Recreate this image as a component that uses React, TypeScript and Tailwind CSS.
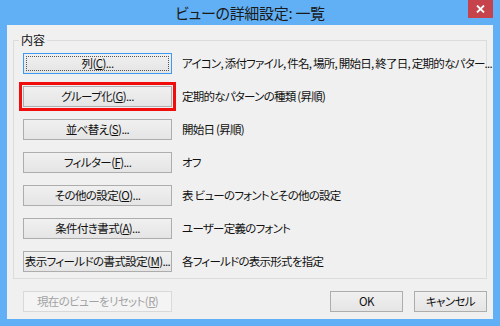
import type { ReactNode } from 'react';

const font =
  "font-['Meiryo_UI','Noto_Sans_CJK_JP','Noto_Sans',sans-serif] [font-feature-settings:'palt']";

type Row = {
  label: string;
  key: string;
  desc: string;
  focused?: boolean;
  marked?: boolean;
};

const rows: Row[] = [
  {
    label: '列(',
    key: 'C',
    desc: 'アイコン, 添付ファイル, 件名, 場所, 開始日, 終了日, 定期的なパター...',
    focused: true,
  },
  { label: 'グループ化(', key: 'G', desc: '定期的なパターンの種類 (昇順)', marked: true },
  { label: '並べ替え(', key: 'S', desc: '開始日 (昇順)' },
  { label: 'フィルター(', key: 'F', desc: 'オフ' },
  { label: 'その他の設定(', key: 'O', desc: '表 ビューのフォントとその他の設定' },
  { label: '条件付き書式(', key: 'A', desc: 'ユーザー定義のフォント' },
  { label: '表示フィールドの書式設定(', key: 'M', desc: '各フィールドの表示形式を指定' },
];

function WinButton({
  children,
  focused,
  disabled,
  className = '',
}: {
  children: ReactNode;
  focused?: boolean;
  disabled?: boolean;
  className?: string;
}) {
  return (
    <button
      type="button"
      disabled={disabled}
      className={`relative flex h-[21px] items-center justify-center whitespace-nowrap border text-[11.5px] leading-none tracking-[-0.6px] ${
        disabled
          ? 'border-[#d9d9d9] bg-[#f4f4f4] text-[#a3a3a3]'
          : focused
            ? 'border-[#3c9af0] bg-gradient-to-b from-[#f0f0f0] to-[#e5e5e5] text-[#111]'
            : 'border-[#adadad] bg-gradient-to-b from-[#f0f0f0] to-[#e5e5e5] text-[#111]'
      } ${className}`}
    >
      {focused && (
        <span className="pointer-events-none absolute inset-[2px] border border-dotted border-[#555]" />
      )}
      <span>{children}</span>
    </button>
  );
}

export default function App() {
  return (
    <div className={`h-[326px] w-[500px] bg-[#61b0f5] ${font}`}>
      <div className="relative flex h-[25px] items-center justify-center">
        <span className="text-[15px] leading-none tracking-[-0.3px] text-[#1a1a1a]">
          ビューの詳細設定: 一覧
        </span>
        <div className="absolute right-[7px] top-0 flex h-[18px] w-[25px] items-center justify-center bg-[#c7434b]">
          <svg width="9" height="8" viewBox="0 0 9 8">
            <path d="M1 0.5 L8 7.5 M8 0.5 L1 7.5" stroke="#fff" strokeWidth="1.8" />
          </svg>
        </div>
      </div>

      <div className="mx-[7px] flex h-[294px] flex-col bg-[#f0f0f0] px-[6px] pt-[15px]">
        <div className="relative border border-[#dcdcdc] px-[9px] pb-[6px] pt-[12px]">
          <span className="absolute -top-[8px] left-[5px] bg-[#f0f0f0] px-[2px] text-[12px] leading-[14px] text-[#111]">
            内容
          </span>
          <div className="flex flex-col gap-[12px]">
            {rows.map((r) => (
              <div key={r.key} className="flex items-center">
                <div className="relative">
                  <WinButton focused={r.focused} className="w-[149px]">
                    {r.label}
                    <span className="underline">{r.key}</span>
                    )...
                  </WinButton>
                  {r.marked && (
                    <span className="pointer-events-none absolute -inset-[4px] border-[3px] border-[#f20d0d]" />
                  )}
                </div>
                <span className="ml-[10px] whitespace-nowrap text-[11.5px] leading-none tracking-[-0.75px] text-[#111]">
                  {r.desc}
                </span>
              </div>
            ))}
          </div>
        </div>

        <div className="mt-[12px] flex items-center pl-[10px]">
          <WinButton disabled className="w-[149px]">
            現在のビューをリセット(<span className="underline">R</span>)
          </WinButton>
          <div className="ml-auto flex gap-[11px]">
            <WinButton className="w-[73px]">OK</WinButton>
            <WinButton className="w-[73px]">キャンセル</WinButton>
          </div>
        </div>
      </div>
    </div>
  );
}
